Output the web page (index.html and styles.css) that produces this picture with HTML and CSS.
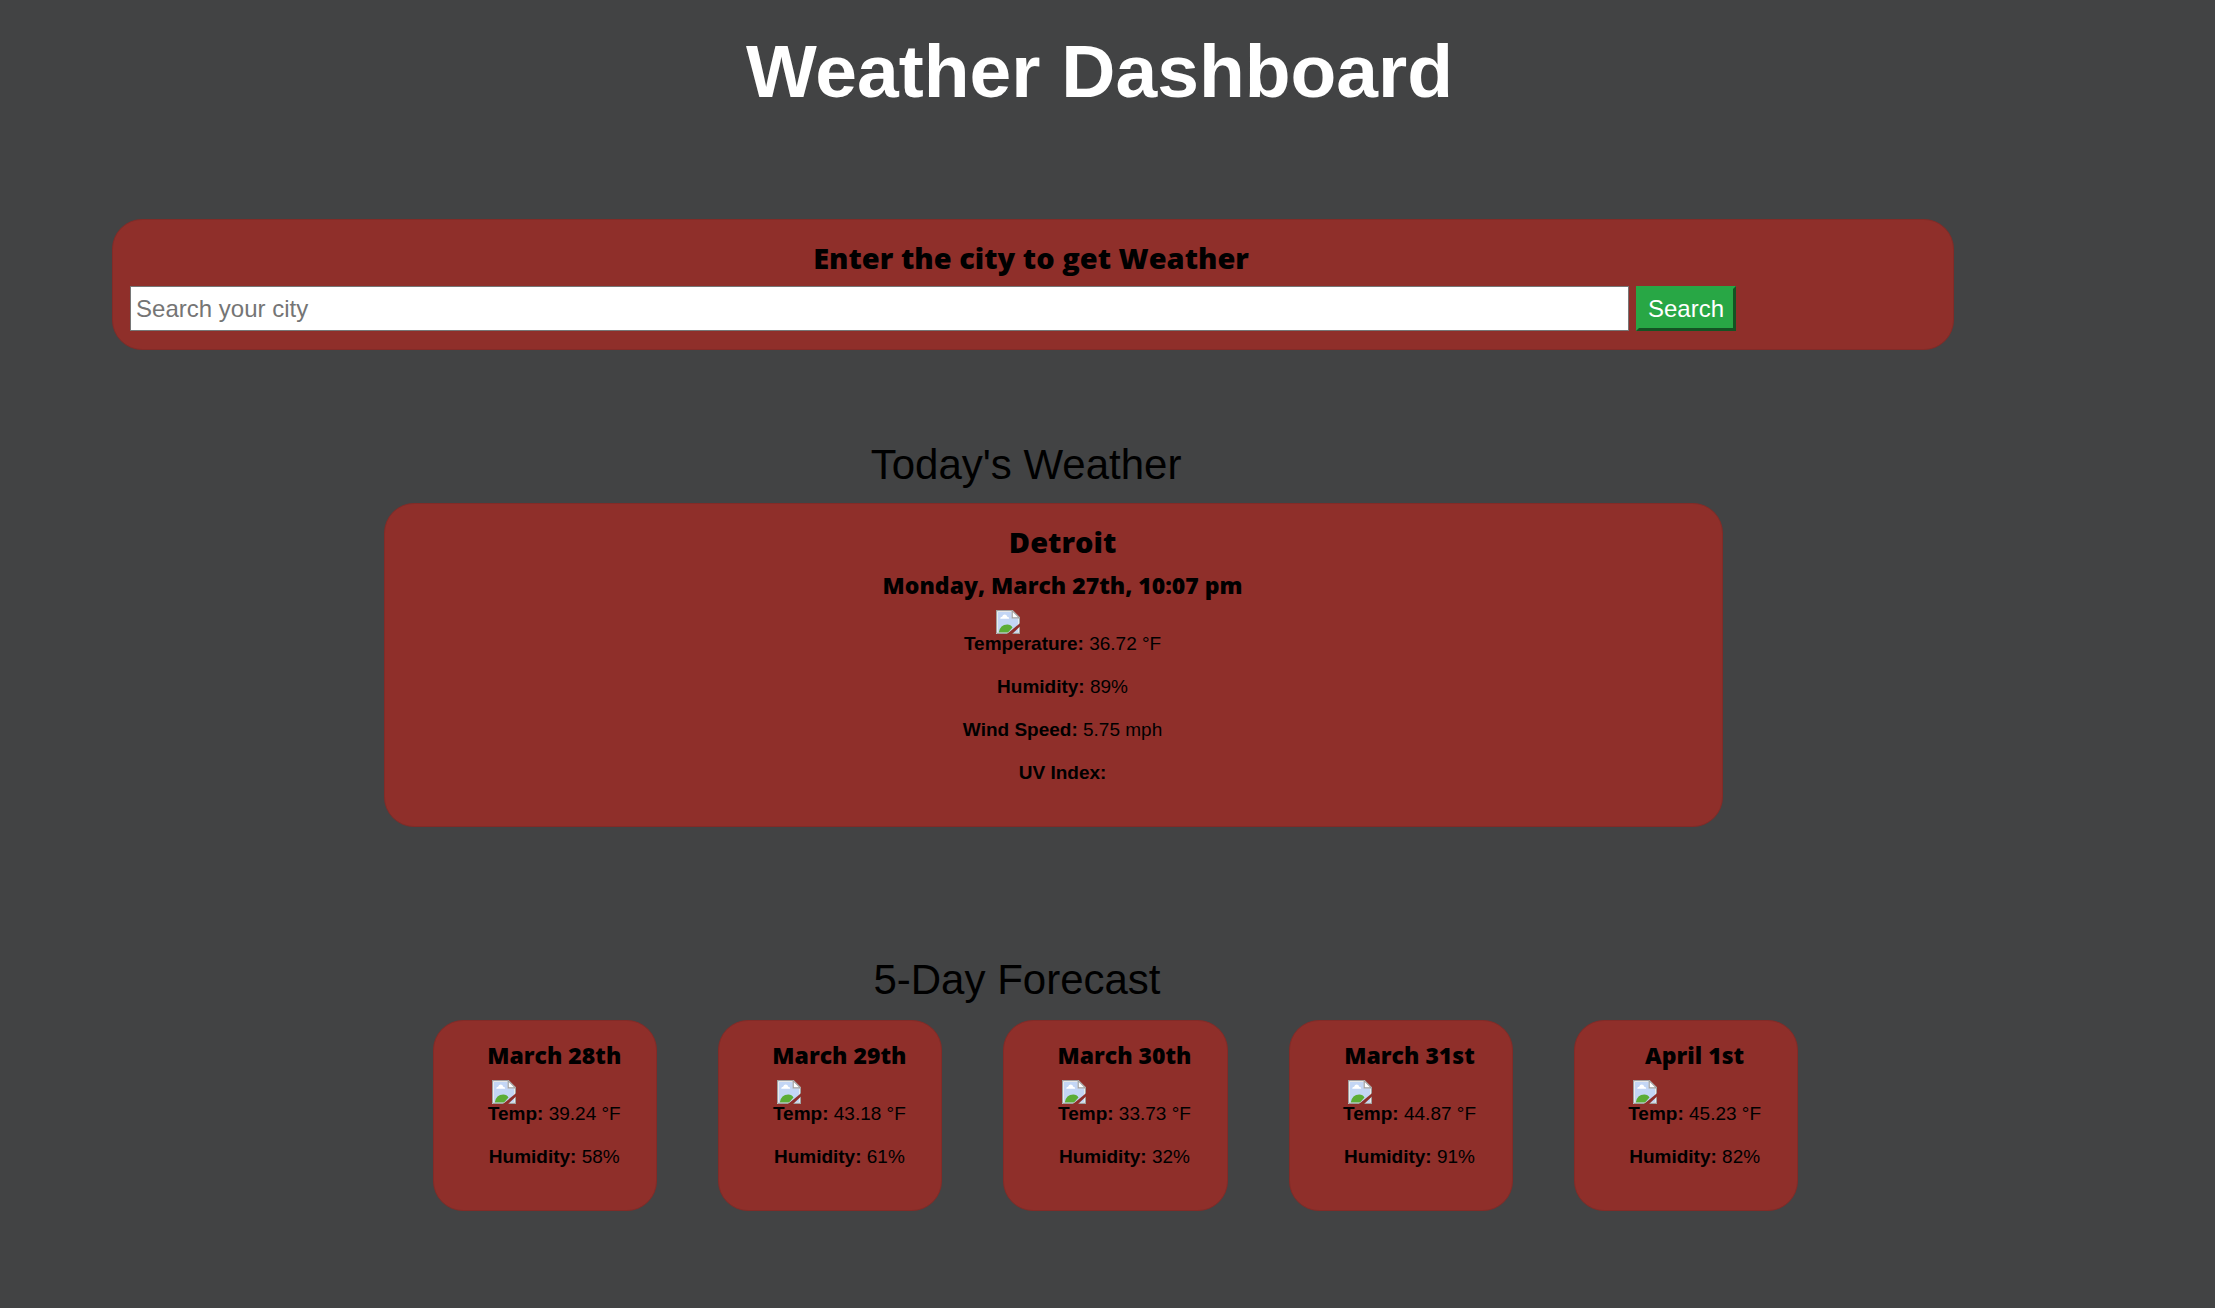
FILE: index.html
```html
<!DOCTYPE html>
<html lang="en">
<head>
<meta charset="utf-8">
<meta name="viewport" content="width=device-width, initial-scale=1">
<title>Weather Dashboard</title>
<link rel="stylesheet" href="styles.css">
</head>
<body>
<svg class="symbols" aria-hidden="true">
  <symbol id="missing" viewBox="0 0 16 16">
    <path fill="#fff" d="M0 0h11l5 5v11H0z"/>
    <path fill="#c3d6f5" d="M1.300 1.300h9.200v4.200h4.200V15H1.300z"/>
    <path fill="#fff" d="M2.800 5.800q0-1.300 1.300-1.300Q4.500 3 5.800 3T7.500 4.500q1.300 0 1.300 1.300z"/>
    <path fill="#5bad35" d="M1.800 15q1-5.300 5.700-5.300 2.500 0 3.500 2L8 15z"/>
    <path fill="none" stroke="#a0a0a0" stroke-width=".8" d="M.4 15.600V.4h10.400L15.600 5.200v10.400H.4M10.800.4v4.800h4.800"/>
    <path fill="#8f2f2a" d="M16 8.800V11l-5.300 5H7.300z"/>
  </symbol>
</svg>
<header class="page-header"><h1>Weather Dashboard</h1></header>
<main>
  <form class="card search">
    <label class="card-title" for="city">Enter the city to get Weather</label>
    <div class="search-row">
      <input class="search-input" id="city" type="text" placeholder="Search your city">
      <button class="search-button" type="button">Search</button>
    </div>
  </form>

  <section class="today">
    <h2 class="section-title">Today's Weather</h2>
    <div class="card conditions">
      <h3 class="card-title">Detroit</h3>
      <h4 class="date">Monday, March 27th, 10:07 pm</h4>
      <div class="icon"><svg width="24" height="24" role="img" aria-label="Weather icon"><use href="#missing"/></svg></div>
      <p><b>Temperature:</b> 36.72 °F</p>
      <p><b>Humidity:</b> 89%</p>
      <p><b>Wind Speed:</b> 5.75 mph</p>
      <p><b>UV Index:</b></p>
    </div>
  </section>

  <section class="forecast">
    <h2 class="section-title">5-Day Forecast</h2>
    <div class="days">
      <article class="card conditions">
        <h4 class="date">March 28th</h4>
        <div class="icon"><svg width="24" height="24" role="img" aria-label="Weather icon"><use href="#missing"/></svg></div>
        <p><b>Temp:</b> 39.24 °F</p>
        <p><b>Humidity:</b> 58%</p>
      </article>
      <article class="card conditions">
        <h4 class="date">March 29th</h4>
        <div class="icon"><svg width="24" height="24" role="img" aria-label="Weather icon"><use href="#missing"/></svg></div>
        <p><b>Temp:</b> 43.18 °F</p>
        <p><b>Humidity:</b> 61%</p>
      </article>
      <article class="card conditions">
        <h4 class="date">March 30th</h4>
        <div class="icon"><svg width="24" height="24" role="img" aria-label="Weather icon"><use href="#missing"/></svg></div>
        <p><b>Temp:</b> 33.73 °F</p>
        <p><b>Humidity:</b> 32%</p>
      </article>
      <article class="card conditions">
        <h4 class="date">March 31st</h4>
        <div class="icon"><svg width="24" height="24" role="img" aria-label="Weather icon"><use href="#missing"/></svg></div>
        <p><b>Temp:</b> 44.87 °F</p>
        <p><b>Humidity:</b> 91%</p>
      </article>
      <article class="card conditions">
        <h4 class="date">April 1st</h4>
        <div class="icon"><svg width="24" height="24" role="img" aria-label="Weather icon"><use href="#missing"/></svg></div>
        <p><b>Temp:</b> 45.23 °F</p>
        <p><b>Humidity:</b> 82%</p>
      </article>
    </div>
  </section>
</main>
</body>
</html>
```
FILE: styles.css
```css
* { box-sizing: border-box; }

body {
  margin: 0;
  background: #424344;
  color: #000;
  font: 19px/23px Arial, "Liberation Sans", sans-serif;
}

h1, h2, h3, h4, p { margin: 0; }

.symbols { display: none; }

.page-header {
  padding: 28px 16px 0 0;
  color: #fff;
  text-align: center;
}

h1 { font-size: 75px; line-height: 86px; }

.card {
  background: #8f2f2a;
  border: 1px solid #822b27;
  border-radius: 30px;
}

.card-title,
.date {
  font-family: "Segoe UI Black", "Open Sans", sans-serif;
  font-weight: 800;
  text-align: center;
}

.card-title { font-size: 29px; line-height: 40px; }

.date { font-size: 23px; line-height: 32px; }

.search {
  width: 83.16%;
  margin: 105px 0 0 5.06%;
  padding: 18px 17px;
}

.search .card-title { display: block; padding-right: 4px; }

.search-row { display: flex; gap: 7px; margin-top: 8px; }

.search-input,
.search-button {
  height: 45px;
  font: 24px/28px Arial, "Liberation Sans", sans-serif;
  border-radius: 0;
}

.search-input {
  width: 83%;
  padding: 0 5px;
  border: 1px solid #767676;
  background: #fff;
}

.search-input::placeholder { color: #757575; }

.search-button {
  width: 100px;
  padding: 0;
  border: 3px solid;
  border-color: #28a745 #145323 #145323 #28a745;
  background: #28a745;
  color: #fff;
}

.section-title {
  font-size: 42px;
  font-weight: 400;
  line-height: 48px;
  text-align: center;
}

.today { width: 60.45%; margin: 91px 0 0 17.34%; }

.today .section-title { padding-right: 55px; }

.conditions {
  padding: 18px 0 22px 18px;
  text-align: center;
}

.conditions p { margin-bottom: 20px; }

.today .conditions { margin-top: 14px; }

.today .date { margin-top: 7px; }

.icon {
  display: flex;
  width: 124px;
  height: 22px;
  margin: 9px auto 0;
}

.icon svg { flex: none; }

.today .icon { width: 134px; }

.forecast { width: 61.6%; margin: 129px 0 0 19.56%; }

.forecast .section-title { padding-right: 197px; }

.days {
  display: grid;
  grid-template-columns: repeat(5, 1fr);
  gap: 61px;
  margin-top: 16px;
  padding-bottom: 40px;
}
```
